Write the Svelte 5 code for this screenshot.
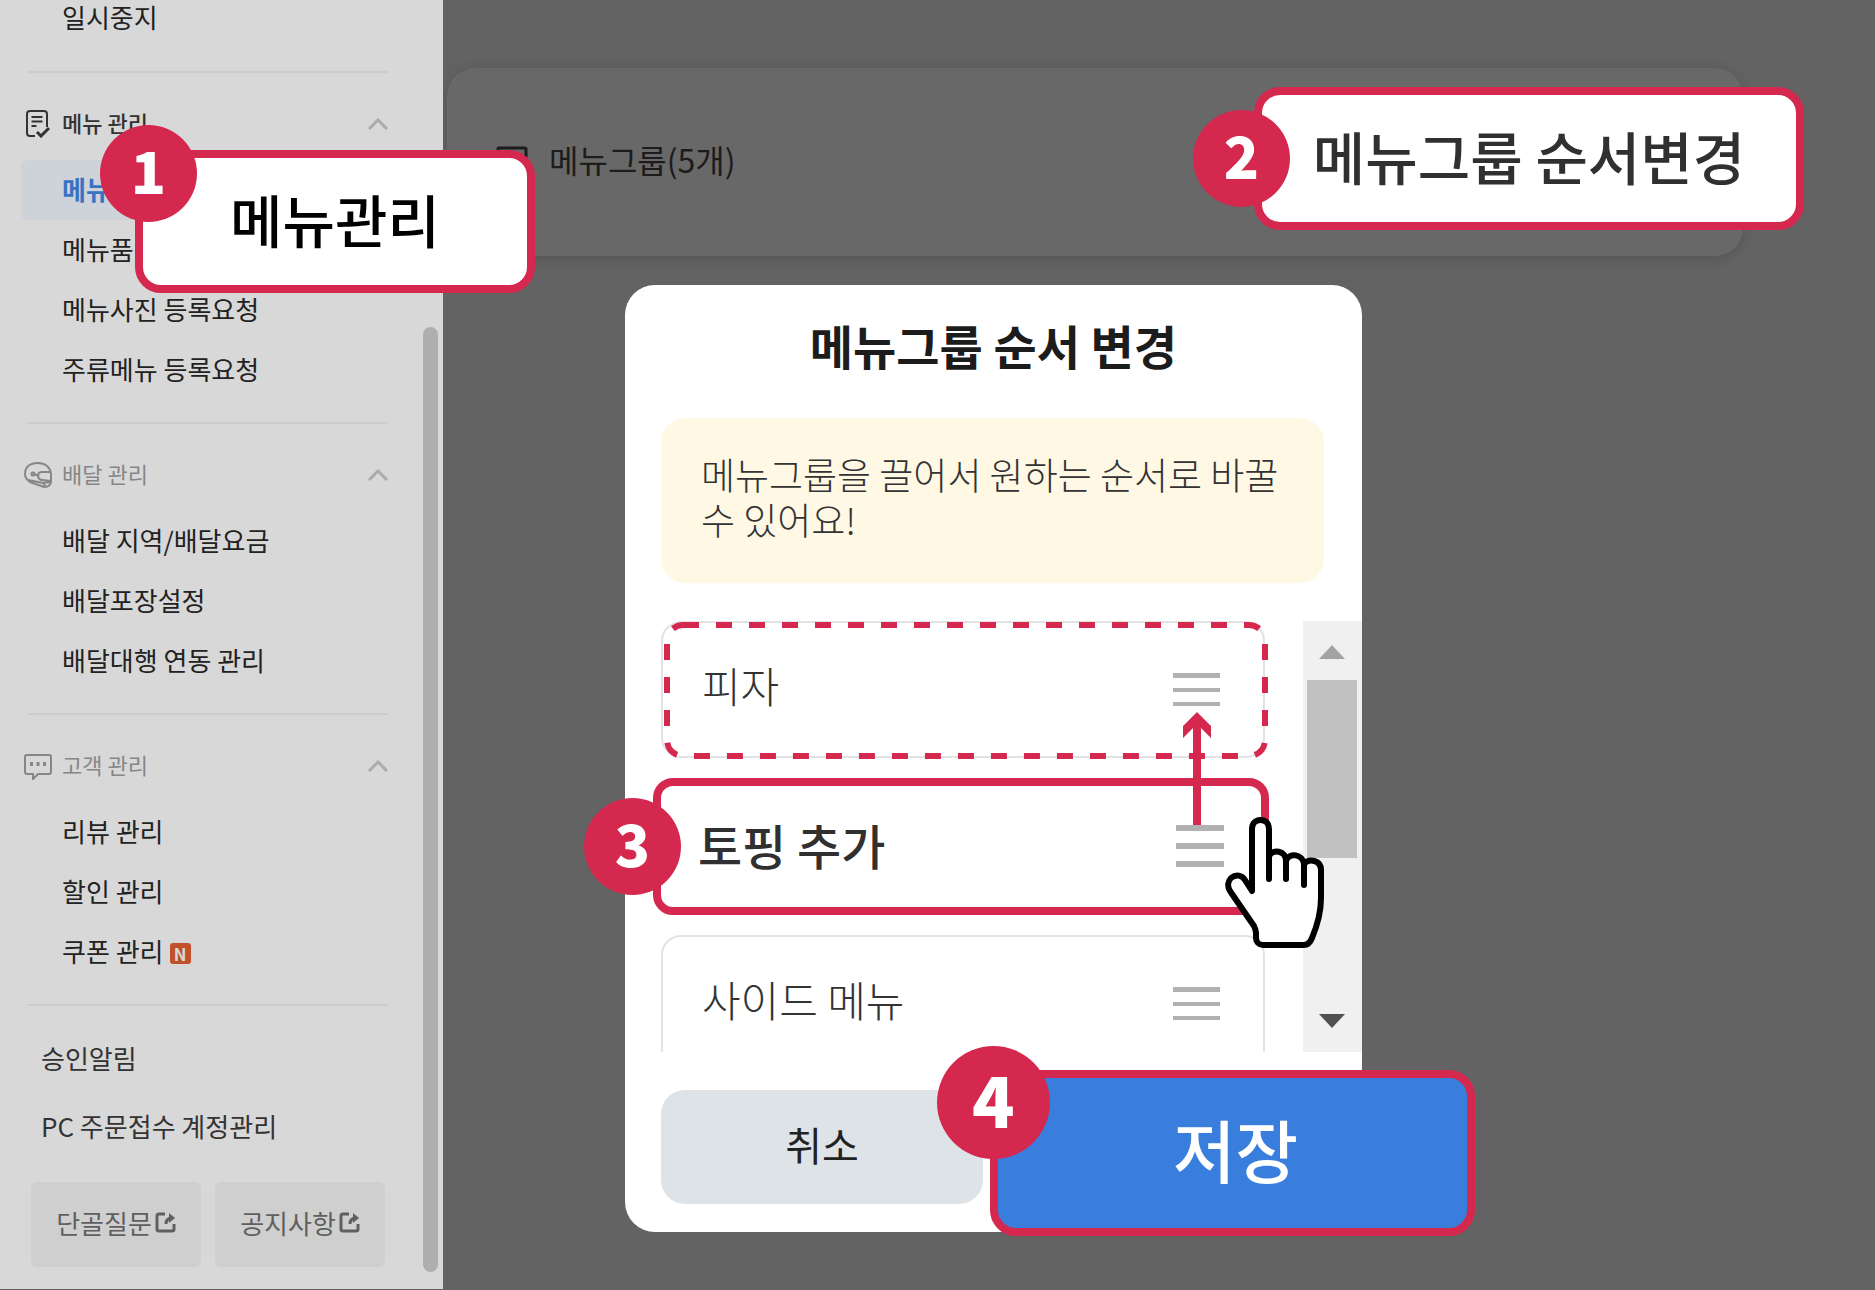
<script>
  const sections = [
    {
      title: '메뉴 관리',
      icon: 'menu',
      current: true,
      items: [
        { label: '메뉴 관리', active: true },
        { label: '메뉴품절 관리' },
        { label: '메뉴사진 등록요청' },
        { label: '주류메뉴 등록요청' },
      ],
    },
    {
      title: '배달 관리',
      icon: 'delivery',
      items: [
        { label: '배달 지역/배달요금' },
        { label: '배달포장설정' },
        { label: '배달대행 연동 관리' },
      ],
    },
    {
      title: '고객 관리',
      icon: 'customer',
      items: [
        { label: '리뷰 관리' },
        { label: '할인 관리' },
        { label: '쿠폰 관리', isNew: true },
      ],
    },
  ]

  const links = ['승인알림', 'PC 주문접수 계정관리']
  const shortcuts = ['단골질문', '공지사항']

  const groups = [
    { name: '피자', target: true },
    { name: '토핑 추가', dragging: true },
    { name: '사이드 메뉴' },
  ]
</script>

<div class="page">
  <aside class="sidebar">
    <nav>
      <a class="item" href="#pause">일시중지</a>

      {#each sections as section}
        <hr />
        <button class="section_title" class:current={section.current} type="button">
          {#if section.icon === 'menu'}
            <svg width="28" height="28" viewBox="-1 0 28 28" fill="none" stroke="currentColor" stroke-width="2">
              <path d="M22 17V4a3 3 0 0 0-3-3H5a3 3 0 0 0-3 3v19a3 3 0 0 0 3 3h5" />
              <path d="M6.500 7h11M6.500 11.500h11M6.500 16h5" />
              <path d="M12 22l4 4 8-8" stroke-width="3" />
            </svg>
          {:else if section.icon === 'delivery'}
            <svg width="28" height="28" viewBox="0 0 28 28" fill="none" stroke="currentColor" stroke-width="2">
              <path d="M1 13C1 6 6 2 14 2c7 0 12 4 13 11v7c0 4-3 6-7 6L6 21c-3-2-5-4-5-8z" />
              <path d="M26 11h-8c-3 0-4 2-4 4s2 4 4 4l9 1M4 19l15 3 3 4M19 22l7-1" />
              <path d="M15 15l-5-2" />
              <circle cx="9" cy="13" r="1.500" />
            </svg>
          {:else}
            <svg width="28" height="28" viewBox="0 0 28 28" fill="none" stroke="currentColor" stroke-width="2">
              <path d="M3 3h22a2 2 0 0 1 2 2v15a2 2 0 0 1-2 2H14l-5 5v-5H3a2 2 0 0 1-2-2V5a2 2 0 0 1 2-2z" />
              <path d="M6 12h3M12.500 12h3M19 12h3" stroke-width="4" />
            </svg>
          {/if}
          <span>{section.title}</span>
          <svg class="chevron" width="20" height="12" viewBox="0 0 20 12" fill="none" stroke="#ababab" stroke-width="3">
            <path d="M1 11l9-9 9 9" />
          </svg>
        </button>
        <div class="items">
          {#each section.items as item}
            <a class="item" class:active={item.active} href="#menu">
              {item.label}
              {#if item.isNew}
                <span class="new">N</span>
              {/if}
            </a>
          {/each}
        </div>
      {/each}

      <hr />
      <div class="links">
        {#each links as link}
          <a href="#link">{link}</a>
        {/each}
      </div>
      <div class="shortcuts">
        {#each shortcuts as shortcut}
          <button type="button">
            {shortcut}
            <svg width="21" height="21" viewBox="0 0 21 21" fill="none" stroke="currentColor" stroke-width="3">
              <path d="M10 2H4a2 2 0 0 0-2 2v13a2 2 0 0 0 2 2h13a2 2 0 0 0 2-2v-5" />
              <path d="M11 12c0-4 2-6 6-6" />
              <path d="M14 1l6 5-6 5z" fill="currentColor" stroke="none" />
            </svg>
          </button>
        {/each}
      </div>
    </nav>
    <div class="sidebar_scroll"></div>

    <div class="callout callout_menu">
      <span class="badge">1</span>
      메뉴관리
    </div>
  </aside>

  <main>
    <section class="panel">
      <svg width="32" height="32" viewBox="0 0 32 32" fill="none" stroke="#1c1c1c" stroke-width="3">
        <rect x="2" y="2" width="28" height="28" rx="1" />
      </svg>
      <h1>메뉴그룹(5개)</h1>
      <div class="callout callout_order">
        <span class="badge">2</span>
        메뉴그룹 순서변경
      </div>
    </section>
  </main>

  <div class="modal" role="dialog" aria-labelledby="modal-title">
    <h2 id="modal-title">메뉴그룹 순서 변경</h2>
    <p class="notice">메뉴그룹을 끌어서 원하는 순서로 바꿀 수 있어요!</p>

    <div class="list_area">
      <ul>
        {#each groups as group}
          <li class:dragging={group.dragging}>
            {#if group.dragging}
              <span class="badge">3</span>
            {/if}
            <span class="name">{group.name}</span>
            {#if group.dragging}
              <svg class="handle" width="48" height="43" viewBox="0 0 48 43" fill="#b1b1b1">
                <path d="M0 0h48v6H0zM0 18h48v6H0zM0 36h48v6H0z" />
              </svg>
              <svg class="arrow" width="30" height="113" viewBox="0 0 30 113" fill="#d4284f">
                <path d="M15 0l14 14v12l-10-10v97h-8V16L1 26V14z" />
              </svg>
              <svg class="hand" width="100" height="134" viewBox="0 0 100 134" fill="#fff" stroke="#000" stroke-width="6" stroke-linecap="round" stroke-linejoin="round">
                <path d="M27 75V13c0-12 17-12 17 0v27c3-7 17-6 17 5 3-9 17-7 18 3 5-6 17-4 17 6v28c0 14-4 28-9 40-2 5-4 7-8 7H38c-4 0-7-3-7-7v-5c0-3-1-5-2-7L5 75c-3-5-2-10 1-13 5-4 11-3 14 2z" />
                <path d="M44 40v23M61 45v18M79 48v21" fill="none" />
              </svg>
            {:else}
              <svg class="handle" width="47" height="34" viewBox="0 0 47 34" fill="#b1b1b1">
                <path d="M0 0h47v5H0zM0 15h47v4H0zM0 29h47v4H0z" />
              </svg>
            {/if}
            {#if group.target}
              <svg class="drop_target">
                <rect x="3" y="3" rx="16" />
              </svg>
            {/if}
          </li>
        {/each}
      </ul>
      <div class="scrollbar">
        <svg width="26" height="14" viewBox="0 0 26 14"><path d="M13 0l13 14H0z" fill="#a3a3a3" /></svg>
        <div class="thumb"></div>
        <svg width="26" height="14" viewBox="0 0 26 14"><path d="M13 14L0 0h26z" fill="#505050" /></svg>
      </div>
    </div>

    <div class="footer">
      <button class="cancel" type="button">취소</button>
      <button class="callout save" type="button">
        <span class="badge">4</span>
        저장
      </button>
    </div>
  </div>
</div>

<style>
  :global(body) {
    margin: 0;
    background: #636363;
  }

  .page {
    position: relative;
    display: flex;
    min-height: 100vh;
    overflow: hidden;
    font-family: 'Noto Sans CJK KR', 'Noto Sans', sans-serif;
    color: #222222;
  }

  button {
    margin: 0;
    padding: 0;
    border: 0;
    background: none;
    font: inherit;
    color: inherit;
  }

  a {
    color: inherit;
    text-decoration: none;
  }

  /* sidebar */
  .sidebar {
    position: relative;
    z-index: 1;
    display: flex;
    flex: 0 0 443px;
    box-sizing: border-box;
    border-bottom: 1px solid #636363;
    background: #d8d8d8;
    font-size: 26px;
  }

  nav {
    flex: 1;
    margin-top: -12px;
    padding: 0 35px 20px 21px;
  }

  hr {
    height: 2px;
    margin: 22px 0 0 6px;
    border: 0;
    background: #cdcdcd;
  }

  nav > .item + hr {
    margin-top: 23px;
  }

  .section_title {
    display: flex;
    align-items: center;
    width: 100%;
    height: 44px;
    margin: 29px 0 14px;
    padding-left: 3px;
    font-size: 22px;
    color: #868686;
  }

  .section_title span {
    flex: 1;
    margin-left: 10px;
    padding-bottom: 4px;
    text-align: left;
  }

  .section_title.current {
    color: #333333;
    font-weight: 500;
  }

  .item {
    display: flex;
    align-items: center;
    box-sizing: border-box;
    height: 60px;
    padding: 0 0 4px 41px;
    border-radius: 6px;
  }

  .item.active {
    background: #cdd3d8;
    color: #3a72c4;
    font-weight: 700;
  }

  .new {
    width: 21px;
    margin: 6px 0 0 6px;
    border-radius: 3px;
    background: #c1502b;
    font-size: 17px;
    font-weight: 700;
    line-height: 21px;
    text-align: center;
    color: #d8d8d8;
  }

  .links {
    margin-top: 18px;
    padding-left: 20px;
    color: #333333;
  }

  .links a {
    display: block;
    line-height: 68px;
  }

  .shortcuts {
    display: flex;
    gap: 14px;
    margin: 22px 3px 0 10px;
  }

  .shortcuts button {
    display: flex;
    flex: 1;
    align-items: center;
    justify-content: center;
    gap: 3px;
    box-sizing: border-box;
    height: 85px;
    padding-bottom: 4px;
    border-radius: 6px;
    background: #cfcfcf;
    color: #5f5f5f;
  }

  .sidebar_scroll {
    width: 15px;
    margin: 327px 5px 17px 0;
    border-radius: 8px;
    background: #aeaeae;
  }

  /* numbered callouts */
  .callout {
    display: flex;
    align-items: center;
    justify-content: center;
    box-sizing: border-box;
    padding: 0 0 8px;
    border: 8px solid #d4284f;
    border-radius: 26px;
    background: #ffffff;
    font-size: 57px;
    font-weight: 500;
    color: #303030;
    white-space: nowrap;
  }

  .badge {
    position: absolute;
    display: flex;
    align-items: center;
    justify-content: center;
    box-sizing: border-box;
    width: 97px;
    height: 97px;
    padding-bottom: 10px;
    border-radius: 50%;
    background: #d4284f;
    font-size: 58px;
    font-weight: 900;
    line-height: 1;
    color: #ffffff;
  }

  .callout_menu {
    position: absolute;
    top: 150px;
    left: 135px;
    width: 400px;
    height: 143px;
    color: #000000;
  }

  .callout_menu .badge {
    top: -33px;
    left: -43px;
  }

  .callout_order {
    position: absolute;
    top: 19px;
    right: -61px;
    width: 550px;
    height: 143px;
  }

  .callout_order .badge {
    top: 15px;
    left: -69px;
  }

  /* page behind the modal */
  main {
    flex: 1;
    padding: 68px 132px 0 4px;
  }

  .panel {
    position: relative;
    display: flex;
    align-items: center;
    gap: 21px;
    height: 188px;
    padding-left: 49px;
    border-radius: 28px;
    background: #686868;
    box-shadow: 0 2px 14px rgba(0, 0, 0, 0.16);
  }

  h1 {
    margin: 0;
    padding-bottom: 6px;
    font-size: 32px;
    font-weight: 400;
    color: #1c1c1c;
  }

  /* modal */
  .modal {
    position: absolute;
    top: 285px;
    left: 33.33%;
    z-index: 2;
    width: 737px;
    border-radius: 30px;
    background: #ffffff;
  }

  h2 {
    margin: 0;
    padding: 33px 0 46px;
    font-size: 47px;
    font-weight: 700;
    line-height: 54px;
    text-align: center;
    color: #1c1c1c;
  }

  .notice {
    margin: 0 38px 38px 36px;
    padding: 34px 36px 41px 40px;
    border-radius: 24px;
    background: #fef8e5;
    font-size: 37px;
    font-weight: 300;
    line-height: 45px;
    word-break: keep-all;
    color: #333333;
  }

  .list_area {
    display: flex;
    gap: 38px;
    height: 431px;
    padding-left: 36px;
  }

  ul {
    display: flex;
    flex: 1;
    flex-direction: column;
    gap: 20px;
    margin: 0;
    padding: 0;
    overflow-x: visible;
    overflow-y: clip;
    list-style: none;
  }

  li {
    position: relative;
    display: flex;
    flex: 0 0 137px;
    align-items: center;
    justify-content: space-between;
    box-sizing: border-box;
    padding: 0 43px 0 39px;
    border: 2px solid #e3e3e3;
    border-radius: 20px;
    font-size: 42px;
    font-weight: 300;
    color: #333333;
  }

  .name {
    padding-bottom: 10px;
  }

  li.dragging {
    z-index: 1;
    margin: 0 -4px 0 -8px;
    padding: 0 37px;
    border: 8px solid #d4284f;
    background: #ffffff;
    font-size: 48px;
    font-weight: 500;
    color: #303030;
  }

  li.dragging .name {
    padding-bottom: 6px;
  }

  li .badge {
    top: 12px;
    left: -77px;
  }

  .drop_target {
    position: absolute;
    top: -1px;
    left: 1px;
    width: 604px;
    height: 137px;
  }

  .drop_target rect {
    width: calc(100% - 6px);
    height: calc(100% - 6px);
    fill: none;
    stroke: #d4284f;
    stroke-width: 6;
    stroke-dasharray: 16 17;
  }

  .arrow {
    position: absolute;
    right: 49px;
    bottom: 82px;
  }

  .hand {
    position: absolute;
    top: 30px;
    right: -64px;
  }

  .scrollbar {
    display: flex;
    flex: 0 0 59px;
    flex-direction: column;
    align-items: center;
    box-sizing: border-box;
    padding: 24px 0;
    background: #f0f0f0;
  }

  .scrollbar svg {
    flex: none;
  }

  .thumb {
    width: 50px;
    height: 178px;
    margin: 21px 0 auto;
    background: #c1c1c1;
  }

  .footer {
    position: relative;
    padding: 38px 36px 28px;
  }

  .cancel {
    display: block;
    box-sizing: border-box;
    width: 322px;
    height: 114px;
    padding-bottom: 6px;
    border-radius: 24px;
    background: #dee3e7;
    font-size: 40px;
  }

  .save {
    position: absolute;
    top: 18px;
    right: -113px;
    width: 485px;
    height: 166px;
    padding: 0 0 10px 6px;
    border: 8px solid #d4284f;
    background: #397edd;
    font-size: 68px;
    font-weight: 500;
    color: #ffffff;
  }

  .save .badge {
    top: -32px;
    left: -61px;
    width: 113px;
    height: 113px;
    font-size: 70px;
  }
</style>
